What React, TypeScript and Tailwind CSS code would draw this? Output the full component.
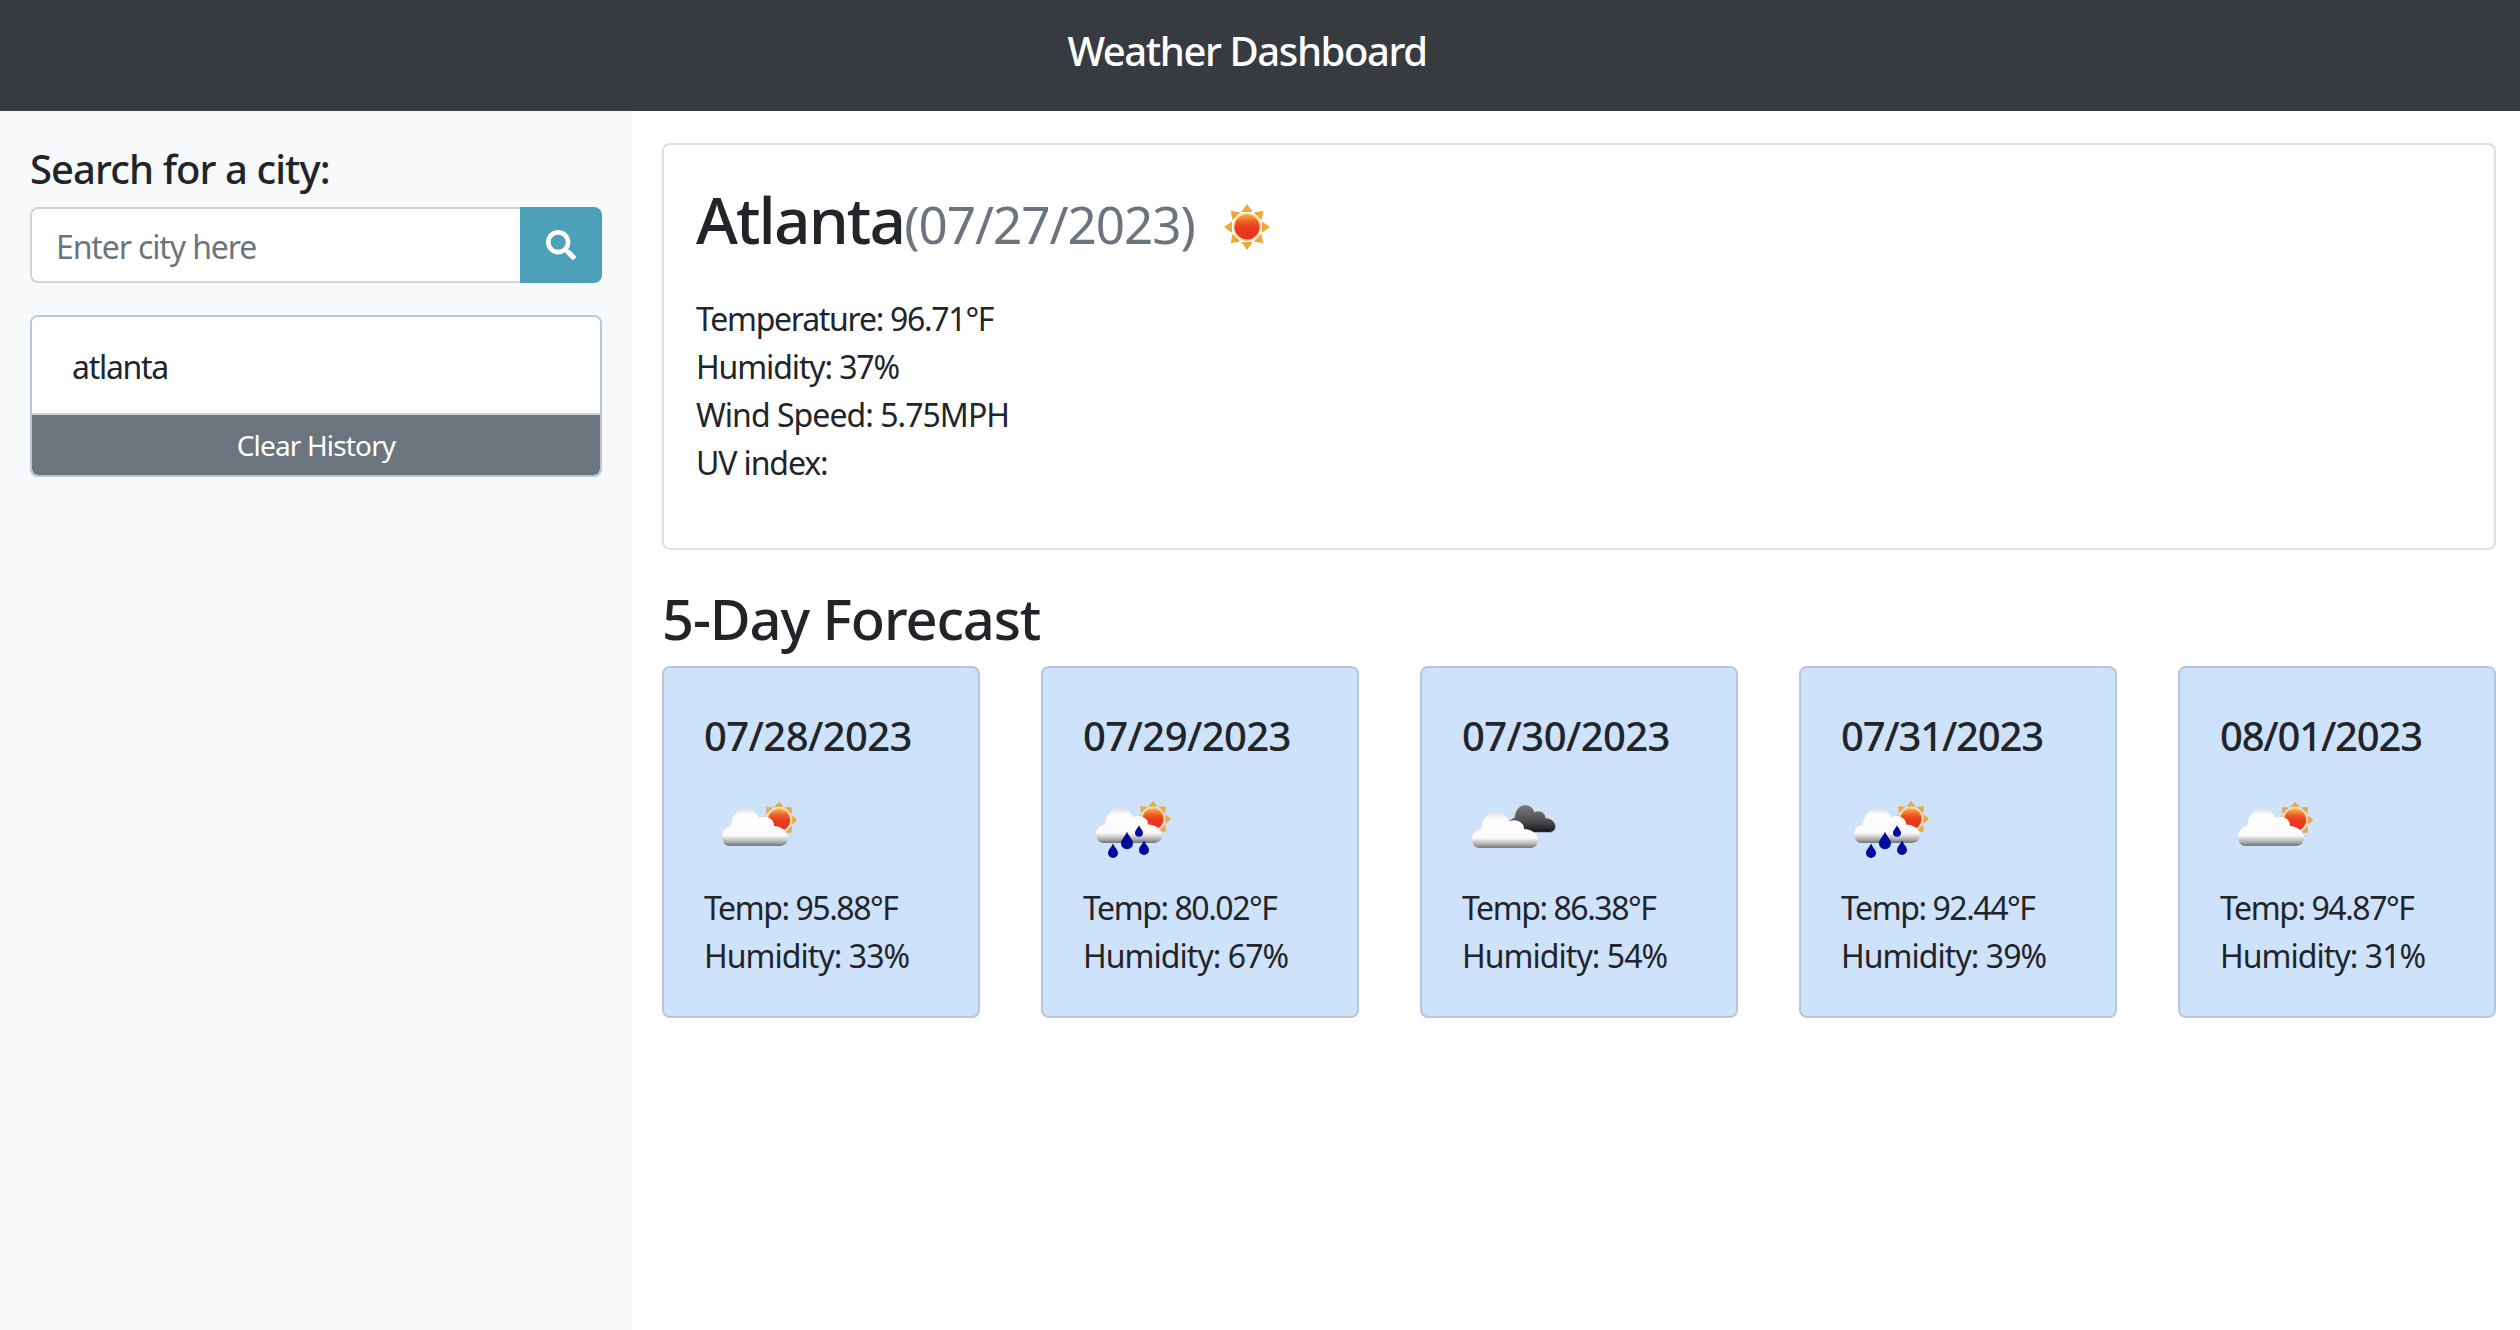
import { FaSearch } from "react-icons/fa";

const CLOUD = "M8 38 C2 38 0 33 0 28 C0 23 4 19 9 18 C10 8 15 1 23 0 C31 0 35 5 37 10 C41 8 46 8 50 12 C52 14 52 17 52 18 C59 18 66 23 66 30 C66 35 62 38 58 38 Z";

function Sun({ cx, cy, r, ray }: { cx: number; cy: number; r: number; ray: number }) {
  const angles = [0, 45, 90, 135, 180, 225, 270, 315];
  return (
    <g>
      {angles.map((a) => (
        <polygon
          key={a}
          points={`${cx - r * 0.45},${cy - r * 1.2} ${cx},${cy - ray} ${cx + r * 0.45},${cy - r * 1.2}`}
          fill="#f0a63c"
          transform={`rotate(${a} ${cx} ${cy})`}
        />
      ))}
      <circle cx={cx} cy={cy} r={r * 1.12} fill="#fbd48a" />
      <circle cx={cx} cy={cy} r={r} fill="url(#sunFill)" />
    </g>
  );
}

function Defs() {
  return (
    <defs>
      <linearGradient id="sunFill" x1="0" y1="0" x2="0" y2="1">
        <stop offset="0" stopColor="#f7b040" />
        <stop offset="0.3" stopColor="#ef5a26" />
        <stop offset="0.55" stopColor="#ea3a20" />
        <stop offset="1" stopColor="#e8321f" />
      </linearGradient>
      <linearGradient id="cloudFill" x1="0" y1="0" x2="0" y2="1">
        <stop offset="0" stopColor="#dedede" />
        <stop offset="0.2" stopColor="#ffffff" />
        <stop offset="0.72" stopColor="#fafafa" />
        <stop offset="0.88" stopColor="#b5b5b5" />
        <stop offset="1" stopColor="#6f7478" />
      </linearGradient>
      <linearGradient id="darkFill" x1="0" y1="0" x2="0" y2="1">
        <stop offset="0" stopColor="#7a7a7a" />
        <stop offset="0.6" stopColor="#4c4c4c" />
        <stop offset="1" stopColor="#151515" />
      </linearGradient>
      <filter id="soft" x="-10%" y="-10%" width="120%" height="120%">
        <feGaussianBlur stdDeviation="0.6" />
      </filter>
    </defs>
  );
}

function Drop({ x, y, s }: { x: number; y: number; s: number }) {
  return (
    <path
      d={`M${x} ${y - s * 1.7} C${x + s * 0.4} ${y - s * 0.8} ${x + s} ${y - s * 0.4} ${x + s} ${y + s * 0.2} A${s} ${s} 0 0 1 ${x - s} ${y + s * 0.2} C${x - s} ${y - s * 0.4} ${x - s * 0.4} ${y - s * 0.8} ${x} ${y - s * 1.7} Z`}
      fill="#00089c"
    />
  );
}

function WeatherIcon({ kind }: { kind: "clear" | "few" | "rain" | "broken" }) {
  return (
    <svg viewBox="0 0 100 100" className="block h-[100px] w-[100px]">
      <Defs />
      <g filter="url(#soft)">
        {kind === "clear" && <Sun cx={50} cy={50} r={12.5} ray={23} />}
        {kind === "few" && (
          <>
            <Sun cx={75} cy={48} r={11} ray={18} />
            <path d={CLOUD} fill="url(#cloudFill)" transform="translate(18 36)" />
          </>
        )}
        {kind === "rain" && (
          <>
            <Sun cx={70} cy={47} r={10.5} ray={18} />
            <path d={CLOUD} fill="url(#cloudFill)" transform="translate(13 36) scale(1 0.92)" />
            <Drop x={56} y={60} s={4} />
            <Drop x={44} y={70} s={6} />
            <Drop x={61} y={77} s={5} />
            <Drop x={30} y={80} s={5} />
          </>
        )}
        {kind === "broken" && (
          <>
            <path d={CLOUD} fill="url(#darkFill)" stroke="#b9bcc0" strokeWidth="0.8" transform="translate(46 33) scale(0.72)" />
            <path d={CLOUD} fill="url(#cloudFill)" transform="translate(10 40) scale(1 0.95)" />
          </>
        )}
      </g>
    </svg>
  );
}

const forecast = [
  { date: "07/28/2023", kind: "few", temp: "95.88", humidity: "33", dateClass: "tracking-[-0.015em]" },
  { date: "07/29/2023", kind: "rain", temp: "80.02", humidity: "67", dateClass: "tracking-[-0.015em]" },
  { date: "07/30/2023", kind: "broken", temp: "86.38", humidity: "54", dateClass: "tracking-[-0.015em]" },
  { date: "07/31/2023", kind: "rain", temp: "92.44", humidity: "39", dateClass: "tracking-[-0.03em]" },
  { date: "08/01/2023", kind: "few", temp: "94.87", humidity: "31", dateClass: "tracking-[-0.03em]" },
] as const;

export default function App() {
  return (
    <div className="flex min-h-[1330px] flex-col bg-white font-['Noto_Sans',sans-serif] text-[32px] leading-[48px] tracking-[-0.035em] text-[#212529]">
      <header className="flex h-[111px] items-center justify-center bg-[#373b40] pr-[26px] pb-[10px]">
        <h1 className="text-[40px] leading-[48px] font-medium tracking-[-0.035em] text-white">Weather Dashboard</h1>
      </header>

      <div className="flex flex-1">
        <aside className="w-[632px] bg-[#f8f9fa] px-[30px] pt-[34px]">
          <h2 className="mb-[14px] text-[40px] leading-[48px] font-medium tracking-[-0.023em]">Search for a city:</h2>
          <div className="mb-8 flex h-[76px]">
            <input
              placeholder="Enter city here"
              className="w-[490px] rounded-l-lg border-2 border-r-0 border-[#ced4da] bg-white px-6 pt-1 tracking-[-0.035em] outline-none placeholder:text-[#6c757d]"
            />
            <button className="flex flex-1 items-center justify-center rounded-r-lg bg-[#4ca0b8] text-white">
              <FaSearch size={30} />
            </button>
          </div>
          <div className="overflow-hidden rounded-lg border-2 border-[#b8c6da]">
            <div className="border-b-2 border-[#ced4da] bg-white px-10 pt-[26px] pb-[22px] tracking-[-0.04em]">atlanta</div>
            <button className="block h-[60px] w-full rounded-b-md bg-[#6c757d] text-[28px] leading-[42px] tracking-[-0.03em] text-white">
              Clear History
            </button>
          </div>
        </aside>

        <main className="flex-1 pt-8 pr-6 pl-[30px]">
          <section className="rounded-lg border-2 border-[#dfdfdf] p-8">
            <div className="mb-[18px] flex items-start">
              <h2 className="text-[64px] leading-[86px] font-medium tracking-[-0.03em]">
                Atlanta
                <small className="text-[51.2px] font-normal tracking-[-0.02em] text-[#6c757d]">(07/27/2023)</small>
              </h2>
              <div className="ml-[2px]">
                <WeatherIcon kind="clear" />
              </div>
            </div>
            <p className="tracking-[-0.04em]">Temperature: 96.71°F</p>
            <p>Humidity: 37%</p>
            <p className="tracking-[-0.03em]">Wind Speed: 5.75MPH</p>
            <p className="mb-[29px]">UV index:</p>
          </section>

          <h3 className="mt-[35px] mb-[14px] text-[56px] leading-[67px] font-medium tracking-[-0.02em]">5-Day Forecast</h3>

          <div className="flex gap-[61px]">
            {forecast.map((day) => (
              <div key={day.date} className="h-[352px] flex-1 rounded-lg border-2 border-[#b8c6da] bg-[#cfe2fb] p-10">
                <h4 className={`mb-3 pt-1 text-[40px] leading-[48px] font-medium ${day.dateClass}`}>{day.date}</h4>
                <div className="mb-3">
                  <WeatherIcon kind={day.kind} />
                </div>
                <p className="tracking-[-0.045em]">Temp: {day.temp}°F</p>
                <p className="tracking-[-0.03em]">Humidity: {day.humidity}%</p>
              </div>
            ))}
          </div>
        </main>
      </div>
    </div>
  );
}
